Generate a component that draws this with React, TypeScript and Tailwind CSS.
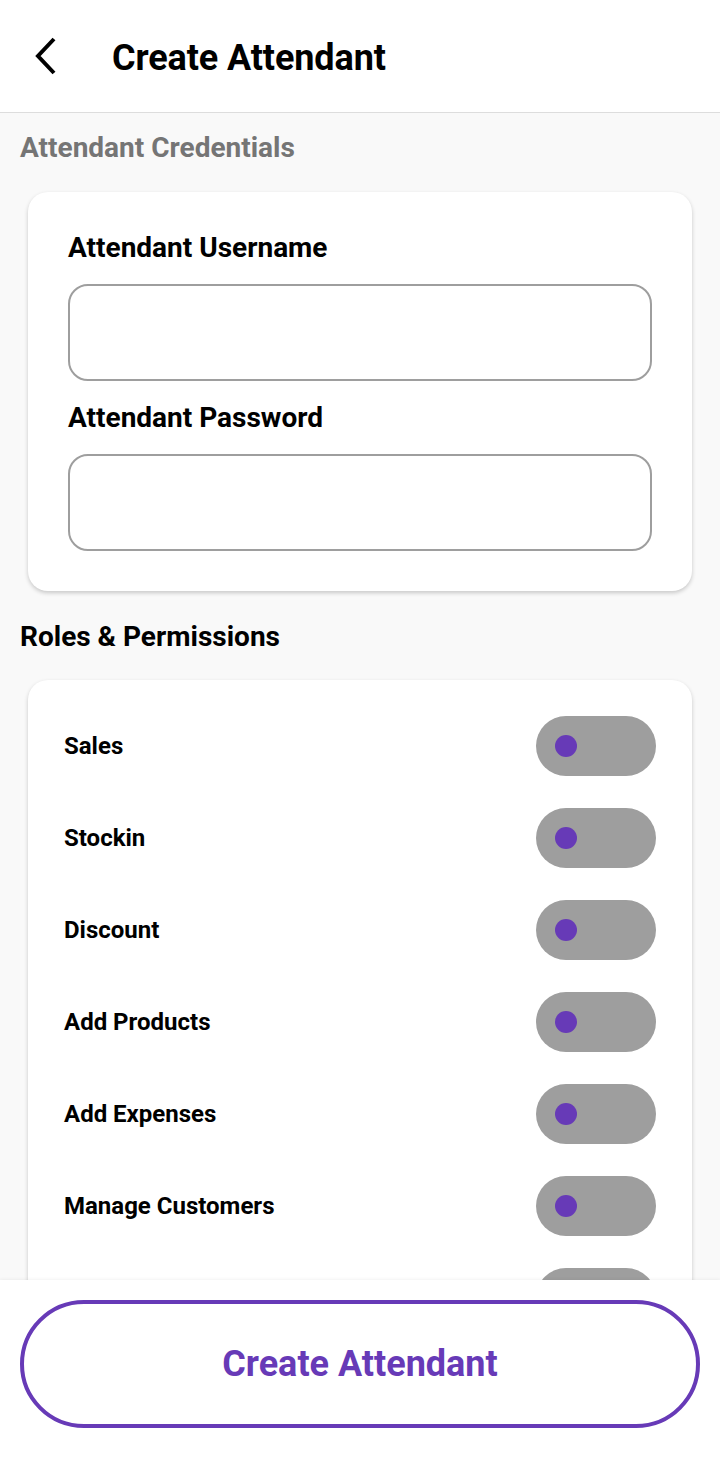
import { useState } from "react";

const permissions = [
  "Sales",
  "Stockin",
  "Discount",
  "Add Products",
  "Add Expenses",
  "Manage Customers",
  "View Reports",
];

function Toggle({ on, onClick }: { on: boolean; onClick: () => void }) {
  return (
    <button
      type="button"
      onClick={onClick}
      className={`flex h-[60px] w-[120px] shrink-0 items-center rounded-full px-[19px] ${
        on ? "justify-end bg-[#b39ddb]" : "justify-start bg-[#9e9e9e]"
      }`}
    >
      <span className="h-[22px] w-[22px] rounded-full bg-[#673ab7]" />
    </button>
  );
}

export default function App() {
  const [enabled, setEnabled] = useState<Record<string, boolean>>({});

  return (
    <div className="flex h-[1471px] w-[720px] flex-col overflow-hidden bg-[#f9f9f9] font-['Roboto',sans-serif]">
      <header className="flex h-[113px] shrink-0 items-center border-b border-[#dddddd] bg-white pl-[30px]">
        <svg width="30" height="42" viewBox="0 0 30 42" className="mt-[-1px]">
          <path d="M24 4 L8 21 L24 38" fill="none" stroke="#000" strokeWidth="4" strokeLinecap="butt" strokeLinejoin="miter" />
        </svg>
        <h1 className="mt-[3px] ml-[52px] text-[36px] font-bold tracking-[-0.1px] text-black">Create Attendant</h1>
      </header>

      <main className="min-h-0 flex-1 overflow-hidden">
        <h2 className="mt-[19px] pl-[20px] text-[28px] leading-[32px] font-bold text-[#757575]">
          Attendant Credentials
        </h2>

        <section className="mx-[28px] mt-[28px] rounded-[20px] bg-white px-[40px] pt-[41px] pb-[40px] shadow-[0_2px_4px_rgba(0,0,0,0.2)]">
          <label className="block text-[28px] leading-[30px] font-bold text-black">Attendant Username</label>
          <input className="mt-[21px] block h-[97px] w-full rounded-[20px] border-2 border-[#9e9e9e] bg-white px-4 text-[24px] outline-none" />
          <label className="mt-[22px] block text-[28px] leading-[30px] font-bold text-black">Attendant Password</label>
          <input type="password" className="mt-[21px] block h-[97px] w-full rounded-[20px] border-2 border-[#9e9e9e] bg-white px-4 text-[24px] outline-none" />
        </section>

        <h2 className="mt-[30px] pl-[20px] text-[28px] leading-[32px] font-bold text-black">
          Roles &amp; Permissions
        </h2>

        <section className="mx-[28px] mt-[27px] flex flex-col gap-[32px] rounded-[20px] bg-white px-[36px] pt-[36px] pb-[36px] shadow-[0_2px_4px_rgba(0,0,0,0.2)]">
          {permissions.map((name) => (
            <div key={name} className="flex items-center justify-between">
              <span className="text-[24px] font-bold text-black">{name}</span>
              <Toggle
                on={!!enabled[name]}
                onClick={() => setEnabled({ ...enabled, [name]: !enabled[name] })}
              />
            </div>
          ))}
        </section>
      </main>

      <footer className="h-[191px] shrink-0 bg-white px-[20px] pt-[20px] shadow-[0_-1px_3px_rgba(0,0,0,0.05)]">
        <button
          type="button"
          className="flex h-[128px] w-full items-center justify-center rounded-full border-[4px] border-[#673ab7] bg-white text-[36px] font-bold text-[#673ab7]"
        >
          Create Attendant
        </button>
      </footer>
    </div>
  );
}
